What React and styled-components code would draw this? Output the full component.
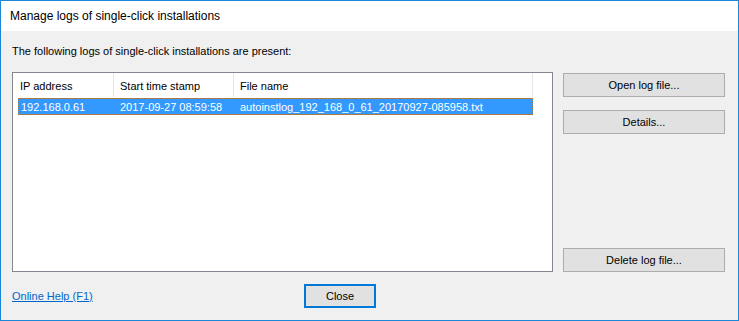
import React from "react";
import styled, { createGlobalStyle } from "styled-components";

const GlobalStyle = createGlobalStyle`
  html, body {
    margin: 0;
    padding: 0;
    background: #ffffff;
  }
  body {
    font-family: "Liberation Sans", "DejaVu Sans", sans-serif;
    font-size: 11px;
    color: #000000;
  }
`;

const logs = [
  {
    ip: "192.168.0.61",
    stamp: "2017-09-27 08:59:58",
    file: "autoinstlog_192_168_0_61_20170927-085958.txt",
  },
];

export default function App() {
  return (
    <>
      <GlobalStyle />
      <Window>
        <TitleBar>Manage logs of single-click installations</TitleBar>
        <Body>
          <Caption>The following logs of single-click installations are present:</Caption>
          <Main>
            <ListBox>
              <HeaderRow>
                <HeaderCell $width={101} $pad={7}>IP address</HeaderCell>
                <HeaderCell $width={120}>Start time stamp</HeaderCell>
                <HeaderCell>File name</HeaderCell>
              </HeaderRow>
              {logs.map((log) => (
                <Row key={log.file} $selected>
                  <Cell $width={96} $pad={3}>{log.ip}</Cell>
                  <Cell $width={120}>{log.stamp}</Cell>
                  <Cell>{log.file}</Cell>
                </Row>
              ))}
            </ListBox>
            <ButtonColumn>
              <Button>Open log file...</Button>
              <Button>Details...</Button>
              <Spacer />
              <Button>Delete log file...</Button>
            </ButtonColumn>
          </Main>
          <Footer>
            <HelpLink href="#">Online Help (F1)</HelpLink>
            <Button $default>Close</Button>
          </Footer>
        </Body>
      </Window>
    </>
  );
}

const Window = styled.div`
  width: 739px;
  height: 321px;
  box-sizing: border-box;
  border: 1px solid #1c86d9;
  background: #f0f0f0;
  display: flex;
  flex-direction: column;
  overflow: hidden;
`;

const TitleBar = styled.div`
  height: 30px;
  background: #ffffff;
  display: flex;
  align-items: center;
  padding-left: 9px;
  padding-bottom: 1px;
  box-sizing: border-box;
  font-size: 12px;
  color: #000000;
`;

const Body = styled.div`
  flex: 1;
  display: flex;
  flex-direction: column;
  padding: 12px 12px 0 11px;
`;

const Caption = styled.div`
  height: 16px;
  line-height: 16px;
`;

const Main = styled.div`
  display: grid;
  grid-template-columns: 541px 162px;
  column-gap: 10px;
  margin-top: 13px;
  height: 200px;
`;

const ListBox = styled.div`
  box-sizing: border-box;
  border: 1px solid #828790;
  background: #ffffff;
  display: flex;
  flex-direction: column;
  padding-right: 19px;
`;

const HeaderRow = styled.div`
  display: flex;
  height: 24px;
  border-right: 1px solid #e5e5e5;
`;

const HeaderCell = styled.div`
  width: ${(p) => (p.$width ? `${p.$width}px` : "auto")};
  flex: ${(p) => (p.$width ? "none" : "1")};
  box-sizing: border-box;
  padding: 2px 0 0 ${(p) => p.$pad ?? 6}px;
  display: flex;
  align-items: center;
  border-right: ${(p) => (p.$width ? "1px solid #e5e5e5" : "none")};
`;

const Row = styled.div`
  display: flex;
  height: 17px;
  margin: 1px 0 0 5px;
  align-items: center;
  background: ${(p) => (p.$selected ? "#3399ff" : "transparent")};
  color: ${(p) => (p.$selected ? "#ffffff" : "#000000")};
  outline: ${(p) => (p.$selected ? "1px dotted #a8763e" : "none")};
  outline-offset: -1px;
`;

const Cell = styled.div`
  width: ${(p) => (p.$width ? `${p.$width}px` : "auto")};
  flex: ${(p) => (p.$width ? "none" : "1")};
  box-sizing: border-box;
  padding-left: ${(p) => p.$pad ?? 6}px;
  white-space: nowrap;
`;

const ButtonColumn = styled.div`
  display: flex;
  flex-direction: column;
  gap: 13px;
  padding-top: 1px;
`;

const Spacer = styled.div`
  flex: 1;
  margin: -13px 0;
`;

const Button = styled.button`
  height: 24px;
  box-sizing: border-box;
  background: #e1e1e1;
  border: ${(p) => (p.$default ? "2px solid #0078d7" : "1px solid #adadad")};
  font-family: inherit;
  font-size: 11px;
  color: #000000;
  padding: 0;
  margin: 0;
  border-radius: 0;
`;

const Footer = styled.div`
  display: grid;
  grid-template-columns: 292px 72px;
  align-items: center;
  margin-top: 12px;
`;

const HelpLink = styled.a`
  color: #0066cc;
  text-decoration: underline;
  font-size: 11px;
`;
